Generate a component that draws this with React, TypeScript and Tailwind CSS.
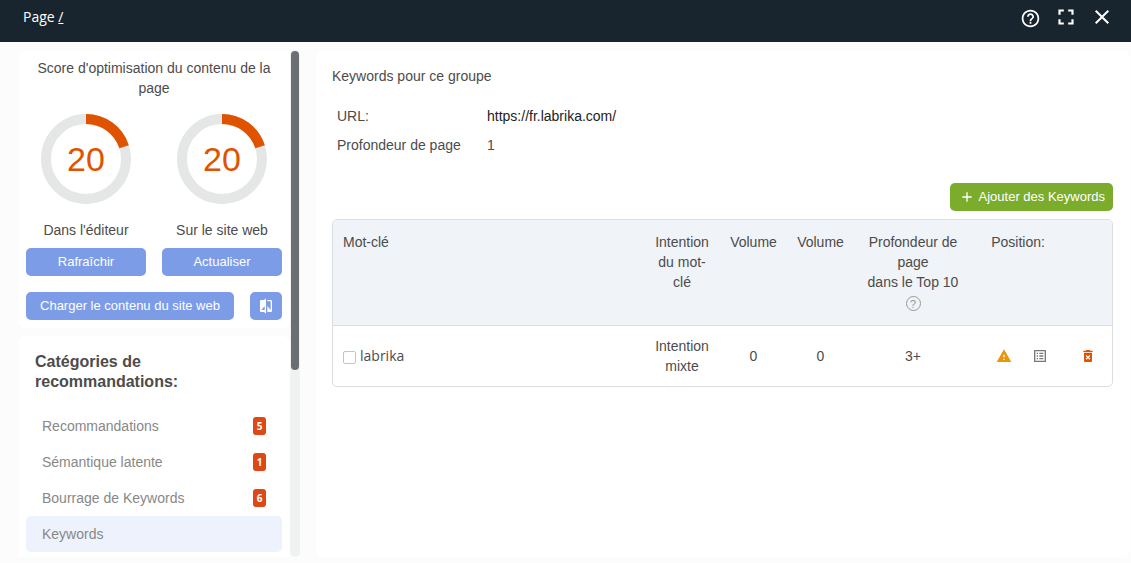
import type { ReactNode } from "react";
import {
  MdAdd,
  MdClose,
  MdCompare,
  MdDeleteForever,
  MdFullscreen,
  MdHelpOutline,
  MdListAlt,
  MdWarning,
} from "react-icons/md";

const scores = [
  { label: "Dans l'éditeur", value: 20, action: "Rafraîchir" },
  { label: "Sur le site web", value: 20, action: "Actualiser" },
];

const categories = [
  { name: "Recommandations", count: 5 },
  { name: "Sémantique latente", count: 1 },
  { name: "Bourrage de Keywords", count: 6 },
  { name: "Keywords", active: true },
];

const keywords = [
  { name: "labrika", intent: "Intention mixte", volume: 0, exactVolume: 0, depth: "3+" },
];

function ScoreRing({ value }: { value: number }) {
  return (
    <div className="relative size-[90px]">
      <svg viewBox="0 0 90 90" className="size-full -rotate-90" fill="none" strokeWidth="10">
        <circle cx="45" cy="45" r="40" stroke="#e5e7e6" />
        <circle cx="45" cy="45" r="40" stroke="#de5200" pathLength="100" strokeDasharray={`${value} 100`} />
      </svg>
      <span className="absolute inset-0 flex items-center justify-center text-[34px] text-[#de5200]">
        {value}
      </span>
    </div>
  );
}

function BlueButton({ children, label, className }: { children: ReactNode; label?: string; className: string }) {
  return (
    <button
      type="button"
      aria-label={label}
      className={`flex h-7 items-center justify-center rounded-[5px] bg-[#7c9ce8] text-[13px] text-white ${className}`}
    >
      {children}
    </button>
  );
}

function Header() {
  return (
    <header className="flex h-[42px] shrink-0 items-center justify-between bg-[#18252f] pb-2 pl-[23px] pr-[11px] text-white">
      <p className="font-['Open_Sans',sans-serif] text-sm">
        Page{" "}
        <a href="#" className="underline">
          /
        </a>
      </p>
      <div className="flex items-center *:flex *:w-9 *:justify-center">
        <button type="button" aria-label="Aide" className="pt-0.5">
          <MdHelpOutline className="size-[21px]" />
        </button>
        <button type="button" aria-label="Plein écran">
          <MdFullscreen className="size-[26px]" />
        </button>
        <button type="button" aria-label="Fermer">
          <MdClose className="size-6" />
        </button>
      </div>
    </header>
  );
}

function Sidebar() {
  return (
    <aside className="flex w-[282px] shrink-0">
      <div className="flex min-h-0 flex-1 flex-col gap-2 overflow-hidden">
        <section className="shrink-0 rounded-lg bg-white p-2">
          <h2 className="text-center">Score d'optimisation du contenu de la page</h2>
          <div className="mt-4 grid grid-cols-2 gap-4">
            {scores.map((score) => (
              <div key={score.label} className="flex flex-col items-center">
                <ScoreRing value={score.value} />
                <p className="mt-4">{score.label}</p>
                <BlueButton className="mt-2 w-full">{score.action}</BlueButton>
              </div>
            ))}
          </div>
          <div className="mt-4 flex gap-4">
            <BlueButton className="flex-1">Charger le contenu du site web</BlueButton>
            <BlueButton label="Comparer" className="w-8">
              <MdCompare className="size-4" />
            </BlueButton>
          </div>
        </section>
        <section className="shrink-0 grow rounded-t-lg bg-white px-2 pb-1 pt-4">
          <h2 className="pl-[9px] pr-16 text-base/5 font-bold">Catégories de recommandations:</h2>
          <nav className="mt-4">
            {categories.map((category) => (
              <a
                key={category.name}
                href="#"
                className={`flex h-9 items-center justify-between rounded-[5px] px-4 text-[#888] ${
                  category.active ? "bg-[#eef2fd]" : ""
                }`}
              >
                {category.name}
                {category.count && (
                  <span className="flex h-[18px] w-[13px] items-center justify-center rounded-[3px] bg-[#dd4814] font-['Open_Sans',sans-serif] text-[10px] font-bold text-white">
                    {category.count}
                  </span>
                )}
              </a>
            ))}
          </nav>
        </section>
      </div>
      <div className="w-[10px] shrink-0 rounded-full bg-[#f0f1f1] pl-px pr-px pt-px">
        <div className="h-[319px] rounded-full bg-[#6c6f72]" />
      </div>
    </aside>
  );
}

function KeywordTable() {
  return (
    <div className="mt-2 overflow-hidden rounded-[5px] border border-[#dcdfe0]">
      <table className="w-full table-fixed text-center">
        <colgroup>
          <col />
          <col className="w-[76px]" />
          <col className="w-[67px]" />
          <col className="w-[67px]" />
          <col className="w-[118px]" />
          <col className="w-[92px]" />
          <col className="w-[48px]" />
        </colgroup>
        <thead>
          <tr className="border-b border-[#dcdfe0] bg-[#f0f3f7] align-top *:pb-[14px] *:pt-3 *:font-normal">
            <th className="px-[10px] text-left">Mot-clé</th>
            <th className="px-[10px]">Intention du mot-clé</th>
            <th>Volume</th>
            <th>Volume</th>
            <th className="px-[10px]">
              Profondeur de page
              <br />
              dans le Top 10
              <span className="mx-auto mt-1 flex size-[15px] items-center justify-center rounded-full border border-[#999] text-[11px] text-[#999]">
                ?
              </span>
            </th>
            <th>Position:</th>
            <td />
          </tr>
        </thead>
        <tbody>
          {keywords.map((keyword) => (
            <tr key={keyword.name} className="*:py-[10px]">
              <td className="px-[10px]">
                <label className="flex items-center gap-1 font-['Open_Sans',sans-serif]">
                  <input
                    type="checkbox"
                    className="mt-[3px] size-[13px] appearance-none rounded-[2px] border border-[#c4c4c4] bg-white checked:bg-[#7c9ce8]"
                  />
                  {keyword.name}
                </label>
              </td>
              <td className="px-[10px]">{keyword.intent}</td>
              <td>{keyword.volume}</td>
              <td>{keyword.exactVolume}</td>
              <td>{keyword.depth}</td>
              <td>
                <div className="flex gap-5 pl-6">
                  <button type="button" aria-label="Avertissement">
                    <MdWarning className="size-4 text-[#e8960c]" />
                  </button>
                  <button type="button" aria-label="Détails">
                    <MdListAlt className="size-4 text-[#777]" />
                  </button>
                </div>
              </td>
              <td>
                <button type="button" aria-label="Supprimer" className="mx-auto block">
                  <MdDeleteForever className="size-4 text-[#de5200]" />
                </button>
              </td>
            </tr>
          ))}
        </tbody>
      </table>
    </div>
  );
}

export default function App() {
  return (
    <div className="flex h-screen flex-col bg-[#fcfcfc] font-['Liberation_Sans',Arial,sans-serif] text-sm/5 text-[#4c4c4c]">
      <Header />
      <div className="flex min-h-0 flex-1 gap-4 pb-1.5 pl-[18px] pr-px pt-2">
        <Sidebar />
        <main className="min-w-0 flex-1 rounded-lg bg-white pl-4 pr-[17px] pt-4">
          <h1>Keywords pour ce groupe</h1>
          <dl className="mt-5 grid grid-cols-[150px_1fr] gap-y-[9px] pl-[5px]">
            <dt>URL:</dt>
            <dd className="text-[#222]">https://fr.labrika.com/</dd>
            <dt>Profondeur de page</dt>
            <dd>1</dd>
          </dl>
          <div className="mt-7 flex justify-end">
            <button
              type="button"
              className="flex h-7 items-center gap-1 rounded-[5px] bg-[#7cac2c] pl-[9px] pr-2 text-[13px] text-white"
            >
              <MdAdd className="size-4" />
              Ajouter des Keywords
            </button>
          </div>
          <KeywordTable />
        </main>
      </div>
    </div>
  );
}
